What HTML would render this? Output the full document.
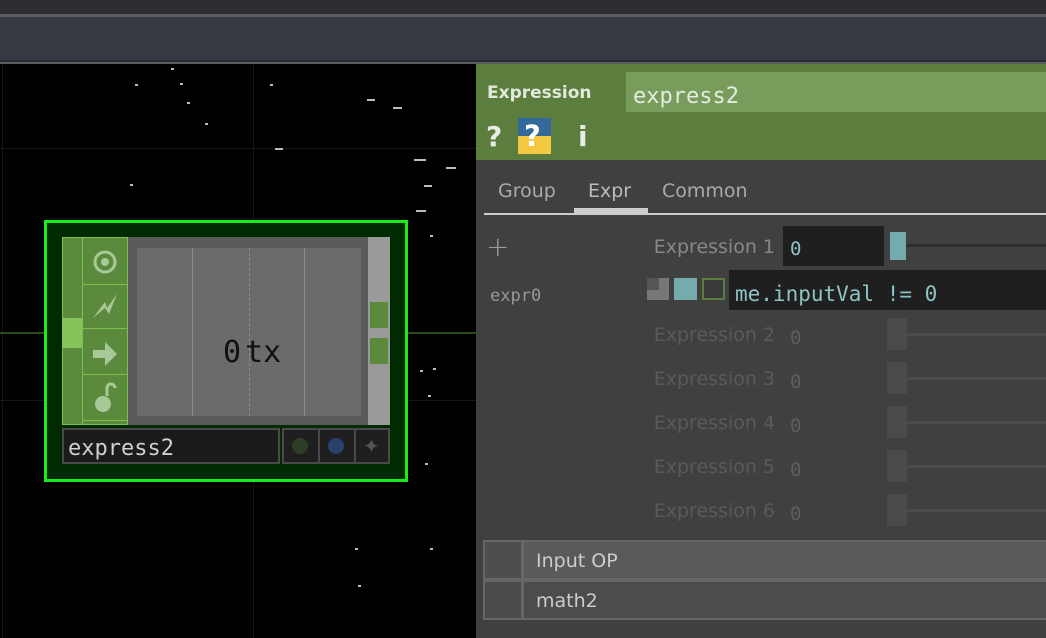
<!DOCTYPE html>
<html><head><style>
*{margin:0;padding:0;box-sizing:border-box}
body{width:1046px;height:638px;overflow:hidden;background:#000;position:relative;font-family:"DejaVu Sans","Liberation Sans",sans-serif}
.a{position:absolute}
.m{font-family:"DejaVu Sans Mono","Liberation Mono",monospace}
.lbl{color:#5a5a5a;font-size:19px;text-align:right;width:140px;left:635px}
.z{color:#5e5e5e;font-size:19px;left:790px}
.sk{left:887px;width:20px;height:32px;background:#4a4a4a}
.sl{left:907px;width:139px;height:3px;background:#4a4a4a}
.d{background:#bbb;width:3px;height:2px}
</style></head><body>
<div class="a" style="left:0;top:0;width:1046px;height:14px;background:#2d2e33"></div>
<div class="a" style="left:0;top:14px;width:1046px;height:3px;background:#5b5c60"></div>
<div class="a" style="left:0;top:17px;width:1046px;height:43px;background:#363942"></div>
<div class="a" style="left:0;top:60px;width:1046px;height:2px;background:#2a2b30"></div>
<div class="a" style="left:0;top:62px;width:1046px;height:2px;background:#5b5c60"></div>
<div class="a" style="left:2px;top:64px;width:1px;height:574px;background:#15151c"></div>
<div class="a" style="left:253px;top:64px;width:1px;height:574px;background:#15151c"></div>
<div class="a" style="left:0;top:148px;width:476px;height:1px;background:#15151c"></div>
<div class="a" style="left:0;top:400px;width:476px;height:1px;background:#15151c"></div>
<div class="a" style="left:0;top:332px;width:476px;height:2px;background:#2a4a1a"></div>
<div class="a d" style="left:171px;top:68px"></div><div class="a d" style="left:135px;top:84px"></div><div class="a d" style="left:180px;top:83px"></div><div class="a d" style="left:187px;top:102px"></div><div class="a d" style="left:205px;top:123px"></div><div class="a d" style="left:270px;top:84px"></div><div class="a d" style="left:367px;top:99px;width:8px"></div><div class="a d" style="left:393px;top:107px;width:9px"></div><div class="a d" style="left:275px;top:148px;width:8px"></div><div class="a d" style="left:414px;top:159px;width:12px"></div><div class="a d" style="left:446px;top:167px;width:10px"></div><div class="a d" style="left:424px;top:185px;width:8px"></div><div class="a d" style="left:416px;top:210px;width:10px"></div><div class="a d" style="left:130px;top:184px"></div><div class="a d" style="left:430px;top:235px"></div><div class="a d" style="left:420px;top:370px"></div><div class="a d" style="left:433px;top:368px"></div><div class="a d" style="left:428px;top:395px"></div><div class="a d" style="left:425px;top:463px"></div><div class="a d" style="left:355px;top:548px"></div><div class="a d" style="left:430px;top:548px"></div><div class="a d" style="left:358px;top:585px"></div>
<div class="a" style="left:44px;top:220px;width:364px;height:262px;border:3px solid #19ec19;background:#012a01"></div>
<div class="a" style="left:62px;top:237px;width:328px;height:188px;background:#5a5a5a"></div>
<div class="a" style="left:62px;top:237px;width:66px;height:188px;background:#5c8a3c;border:1px solid #7cc050"></div>
<div class="a" style="left:82px;top:237px;width:1px;height:188px;background:#7cc050"></div>
<div class="a" style="left:62px;top:318px;width:20px;height:30px;background:#85c45a"></div>
<div class="a" style="left:83px;top:284px;width:45px;height:1px;background:#7cc050"></div>
<div class="a" style="left:83px;top:328px;width:45px;height:1px;background:#7cc050"></div>
<div class="a" style="left:83px;top:374px;width:45px;height:1px;background:#7cc050"></div>
<div class="a" style="left:83px;top:420px;width:45px;height:1px;background:#7cc050"></div>
<svg class="a" style="left:83px;top:238px" width="45" height="186" fill="#a8c898" stroke="#a8c898">
<circle cx="22" cy="24" r="10" fill="none" stroke-width="3"/><circle cx="22" cy="24" r="4" stroke="none"/>
<path d="M10 80 L22 64 L24 70 L34 56 L26 76 L22 70 Z" stroke="none"/>
<path d="M10 112 H22 V104 L34 116 L22 128 V120 H10 Z" stroke="none"/>
<circle cx="20" cy="166" r="8" stroke="none"/><path d="M24 158 V150 a4 4 0 0 1 8 0" fill="none" stroke-width="3"/>
</svg>
<div class="a" style="left:137px;top:248px;width:224px;height:168px;background:#6b6b6b"></div>
<div class="a" style="left:192px;top:248px;width:1px;height:168px;background:#8a8a8a"></div>
<div class="a" style="left:304px;top:248px;width:1px;height:168px;background:#8a8a8a"></div>
<div class="a" style="left:249px;top:248px;width:0;height:168px;border-left:1px dashed #8a8a8a"></div>
<div class="a m" style="left:223px;top:335px;font-size:30px;color:#111">0<span style="margin-left:4px">tx</span></div>
<div class="a" style="left:368px;top:237px;width:22px;height:188px;background:#9a9a9a"></div>
<div class="a" style="left:370px;top:302px;width:18px;height:26px;background:#5b8a3c"></div>
<div class="a" style="left:370px;top:338px;width:18px;height:26px;background:#5b8a3c"></div>
<div class="a" style="left:62px;top:428px;width:218px;height:36px;background:#1b1b1b;border:2px solid #4a4a4a"></div>
<div class="a m" style="left:68px;top:436px;font-size:22px;color:#cfcfcf">express2</div>
<div class="a" style="left:282px;top:428px;width:108px;height:36px;background:#4a4a4a"></div>
<div class="a" style="left:284px;top:430px;width:34px;height:32px;background:#1f1f1f"></div>
<div class="a" style="left:320px;top:430px;width:34px;height:32px;background:#1f1f1f"></div>
<div class="a" style="left:356px;top:430px;width:32px;height:32px;background:#1f1f1f"></div>
<div class="a" style="left:292px;top:438px;width:16px;height:16px;border-radius:50%;background:#2e3e24"></div>
<div class="a" style="left:328px;top:438px;width:16px;height:16px;border-radius:50%;background:#27406c"></div>
<div class="a" style="left:363px;top:436px;font-size:20px;color:#555;line-height:20px">✦</div>
<div class="a" style="left:476px;top:64px;width:570px;height:574px;background:#404040"></div>
<div class="a" style="left:476px;top:64px;width:570px;height:96px;background:#5b7e3e"></div>
<div class="a" style="left:487px;top:83px;font-size:17px;font-weight:bold;color:#e2e8dc">Expression</div>
<div class="a" style="left:626px;top:72px;width:420px;height:40px;background:#789c5c"></div>
<div class="a m" style="left:633px;top:84px;font-size:22px;color:#e4ece0">express2</div>
<div class="a" style="left:486px;top:120px;font-size:28px;font-weight:bold;color:#e8ece4">?</div>
<div class="a" style="left:518px;top:118px;width:33px;height:36px;background:linear-gradient(#336a9a 0 50%,#f5c842 50%)"></div>
<div class="a" style="left:524px;top:119px;font-size:29px;font-weight:bold;color:#fff">?</div>
<div class="a" style="left:578px;top:120px;font-size:28px;font-weight:bold;color:#e8ece4">i</div>
<div class="a" style="left:498px;top:180px;font-size:19px;color:#aaa">Group</div>
<div class="a" style="left:588px;top:180px;font-size:19px;color:#bbb">Expr</div>
<div class="a" style="left:662px;top:180px;font-size:19px;color:#aaa">Common</div>
<div class="a" style="left:574px;top:208px;width:74px;height:5px;background:#ccc"></div>
<div class="a" style="left:484px;top:213px;width:562px;height:2px;background:#ccc"></div>
<div class="a" style="left:486px;top:230px;font-size:28px;color:#999;font-weight:200">+</div>
<div class="a lbl" style="top:236px;color:#888">Expression 1</div>
<div class="a" style="left:783px;top:226px;width:101px;height:40px;background:#1f1f1f"></div>
<div class="a m" style="left:790px;top:238px;font-size:19px;color:#8cc4c4">0</div>
<div class="a" style="left:890px;top:232px;width:16px;height:28px;background:#76abab"></div>
<div class="a" style="left:906px;top:244px;width:140px;height:3px;background:#2e2e2e"></div>
<div class="a m" style="left:490px;top:286px;font-size:17px;color:#999">expr0</div>
<div class="a" style="left:647px;top:278px;width:22px;height:22px;background:#777"></div>
<div class="a" style="left:647px;top:278px;width:12px;height:12px;background:#555"></div>
<div class="a" style="left:674px;top:278px;width:23px;height:22px;background:#76abab"></div>
<div class="a" style="left:702px;top:278px;width:23px;height:22px;border:2px solid #5b7e3e;background:#3a3a3a"></div>
<div class="a" style="left:729px;top:270px;width:317px;height:40px;background:#1f1f1f"></div>
<div class="a m" style="left:735px;top:282px;font-size:21px;color:#8cc4c4">me.inputVal != 0</div>
<div class="a lbl" style="top:324px">Expression 2</div><div class="a m z" style="top:327px">0</div><div class="a sk" style="top:318px"></div><div class="a sl" style="top:333px"></div>
<div class="a lbl" style="top:368px">Expression 3</div><div class="a m z" style="top:371px">0</div><div class="a sk" style="top:362px"></div><div class="a sl" style="top:377px"></div>
<div class="a lbl" style="top:412px">Expression 4</div><div class="a m z" style="top:415px">0</div><div class="a sk" style="top:406px"></div><div class="a sl" style="top:421px"></div>
<div class="a lbl" style="top:456px">Expression 5</div><div class="a m z" style="top:459px">0</div><div class="a sk" style="top:450px"></div><div class="a sl" style="top:465px"></div>
<div class="a lbl" style="top:500px">Expression 6</div><div class="a m z" style="top:503px">0</div><div class="a sk" style="top:494px"></div><div class="a sl" style="top:509px"></div>
<div class="a" style="left:483px;top:540px;width:563px;height:80px;background:#666"></div>
<div class="a" style="left:485px;top:542px;width:36px;height:36px;background:#4e4e4e"></div>
<div class="a" style="left:524px;top:542px;width:522px;height:36px;background:#5a5a5a"></div>
<div class="a" style="left:485px;top:582px;width:36px;height:36px;background:#4a4a4a"></div>
<div class="a" style="left:524px;top:582px;width:522px;height:36px;background:#4c4c4c"></div>
<div class="a" style="left:536px;top:550px;font-size:19px;color:#ccc">Input OP</div>
<div class="a" style="left:536px;top:590px;font-size:19px;color:#ccc">math2</div>
</body></html>
